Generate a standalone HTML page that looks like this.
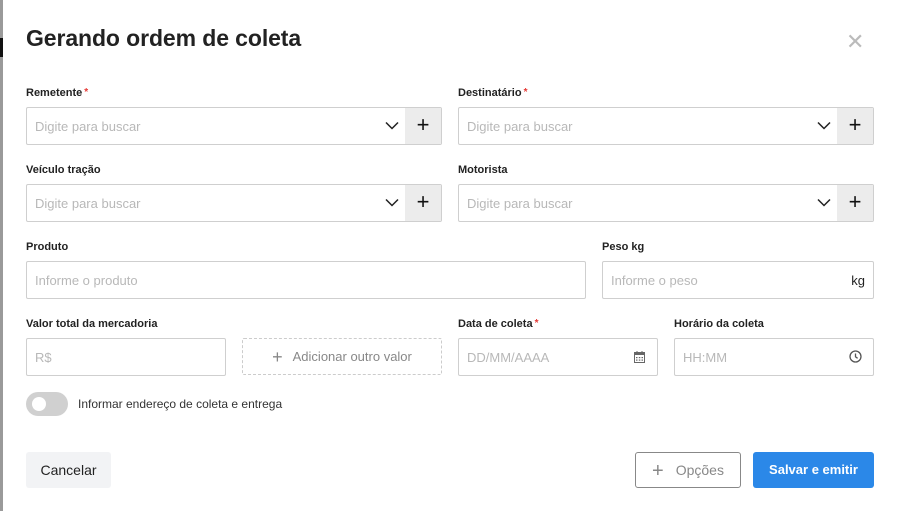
<!DOCTYPE html>
<html><head><style>
body{margin:0;width:897px;height:511px;background:#fff;position:relative;overflow:hidden;font-family:"Liberation Sans",sans-serif;color:#222}
.a{position:absolute}
.lbl{position:absolute;font-size:11px;font-weight:bold;color:#222}
.lbl i{color:#e53935;font-style:normal;font-size:10px;vertical-align:top;margin-left:2px}
.in{position:absolute;border:1px solid #cfcfcf;border-radius:2px;font-size:13px;color:#b8b8b8;line-height:37px;padding-left:8px;box-sizing:border-box;height:38px}
.pl{position:absolute;right:0;top:0;width:36px;height:36px;background:#ececec;font-size:22px;color:#111;text-align:center;line-height:34px}
.chev{position:absolute;top:13px}
</style></head><body>
<div class="a" style="left:0;top:0;width:3px;height:511px;background:#9a9a9a"></div>
<div class="a" style="left:0;top:38px;width:3px;height:19px;background:#111"></div>
<div class="a" style="left:26px;top:25px;font-size:23px;font-weight:bold;color:#222;letter-spacing:-0.1px">Gerando ordem de coleta</div>
<div class="a" style="left:846px;top:29px;font-size:22px;color:#bbb">✕</div>

<div class="lbl" style="left:26px;top:87px">Remetente<i>*</i></div>
<div class="in" style="left:26px;top:107px;width:416px">Digite para buscar<svg class="chev" style="left:358px" width="14" height="9" viewBox="0 0 14 9"><path d="M1 1.5L7 7.5L13 1.5" fill="none" stroke="#222" stroke-width="1.5"/></svg><div class="pl">+</div></div>
<div class="lbl" style="left:458px;top:87px">Destinatário<i>*</i></div>
<div class="in" style="left:458px;top:107px;width:416px">Digite para buscar<svg class="chev" style="left:358px" width="14" height="9" viewBox="0 0 14 9"><path d="M1 1.5L7 7.5L13 1.5" fill="none" stroke="#222" stroke-width="1.5"/></svg><div class="pl">+</div></div>

<div class="lbl" style="left:26px;top:164px">Veículo tração</div>
<div class="in" style="left:26px;top:184px;width:416px">Digite para buscar<svg class="chev" style="left:358px" width="14" height="9" viewBox="0 0 14 9"><path d="M1 1.5L7 7.5L13 1.5" fill="none" stroke="#222" stroke-width="1.5"/></svg><div class="pl">+</div></div>
<div class="lbl" style="left:458px;top:164px">Motorista</div>
<div class="in" style="left:458px;top:184px;width:416px">Digite para buscar<svg class="chev" style="left:358px" width="14" height="9" viewBox="0 0 14 9"><path d="M1 1.5L7 7.5L13 1.5" fill="none" stroke="#222" stroke-width="1.5"/></svg><div class="pl">+</div></div>

<div class="lbl" style="left:26px;top:241px">Produto</div>
<div class="in" style="left:26px;top:261px;width:560px">Informe o produto</div>
<div class="lbl" style="left:602px;top:241px">Peso kg</div>
<div class="in" style="left:602px;top:261px;width:272px">Informe o peso<span class="a" style="right:8px;top:0;color:#222">kg</span></div>

<div class="lbl" style="left:26px;top:318px">Valor total da mercadoria</div>
<div class="in" style="left:26px;top:338px;width:200px">R$</div>
<div class="a" style="left:242px;top:338px;width:200px;height:37px;box-sizing:border-box;border:1px dashed #ccc;border-radius:2px;font-size:13px;color:#888;line-height:35px;text-align:center"><span style="font-size:18px;vertical-align:-2px;margin-right:10px">+</span>Adicionar outro valor</div>
<div class="lbl" style="left:458px;top:318px">Data de coleta<i>*</i></div>
<div class="in" style="left:458px;top:338px;width:200px">DD/MM/AAAA<svg class="a" style="left:175px;top:12px" width="11" height="12" viewBox="0 0 11 12"><rect x="0.5" y="1.5" width="10" height="10" fill="none" stroke="#666"/><rect x="0.5" y="1.5" width="10" height="2.5" fill="#666"/><rect x="2.5" y="0" width="1" height="2" fill="#666"/><rect x="7.5" y="0" width="1" height="2" fill="#666"/><g fill="#666"><rect x="2" y="6" width="1.5" height="1.2"/><rect x="4.8" y="6" width="1.5" height="1.2"/><rect x="7.5" y="6" width="1.5" height="1.2"/><rect x="2" y="8.5" width="1.5" height="1.2"/><rect x="4.8" y="8.5" width="1.5" height="1.2"/><rect x="7.5" y="8.5" width="1.5" height="1.2"/></g></svg></div>
<div class="lbl" style="left:674px;top:318px">Horário da coleta</div>
<div class="in" style="left:674px;top:338px;width:200px">HH:MM<svg class="a" style="left:174px;top:11px" width="13" height="13" viewBox="0 0 13 13"><circle cx="6.5" cy="6.5" r="5.5" fill="none" stroke="#555" stroke-width="1.3"/><path d="M6.5 3.5V6.8L8.6 8.3" fill="none" stroke="#555" stroke-width="1.3"/></svg></div>

<div class="a" style="left:26px;top:392px;width:42px;height:24px;border-radius:12px;background:#d0d0d0"></div>
<div class="a" style="left:32px;top:397px;width:14px;height:14px;border-radius:7px;background:#fff"></div>
<div class="a" style="left:78px;top:397px;font-size:12px;color:#333">Informar endereço de coleta e entrega</div>

<div class="a" style="left:26px;top:452px;width:85px;height:36px;background:#f2f3f5;border-radius:3px;font-size:14px;color:#222;line-height:36px;text-align:center">Cancelar</div>
<div class="a" style="left:635px;top:452px;width:106px;height:36px;box-sizing:border-box;border:1px solid #888;border-radius:3px;font-size:14px;color:#888;line-height:34px;text-align:center"><span style="font-size:20px;vertical-align:-2px;margin-right:12px">+</span>Opções</div>
<div class="a" style="left:753px;top:452px;width:121px;height:36px;background:#2b88e8;border-radius:3px;font-size:13px;font-weight:bold;color:#fff;line-height:36px;text-align:center">Salvar e emitir</div>
</body></html>
